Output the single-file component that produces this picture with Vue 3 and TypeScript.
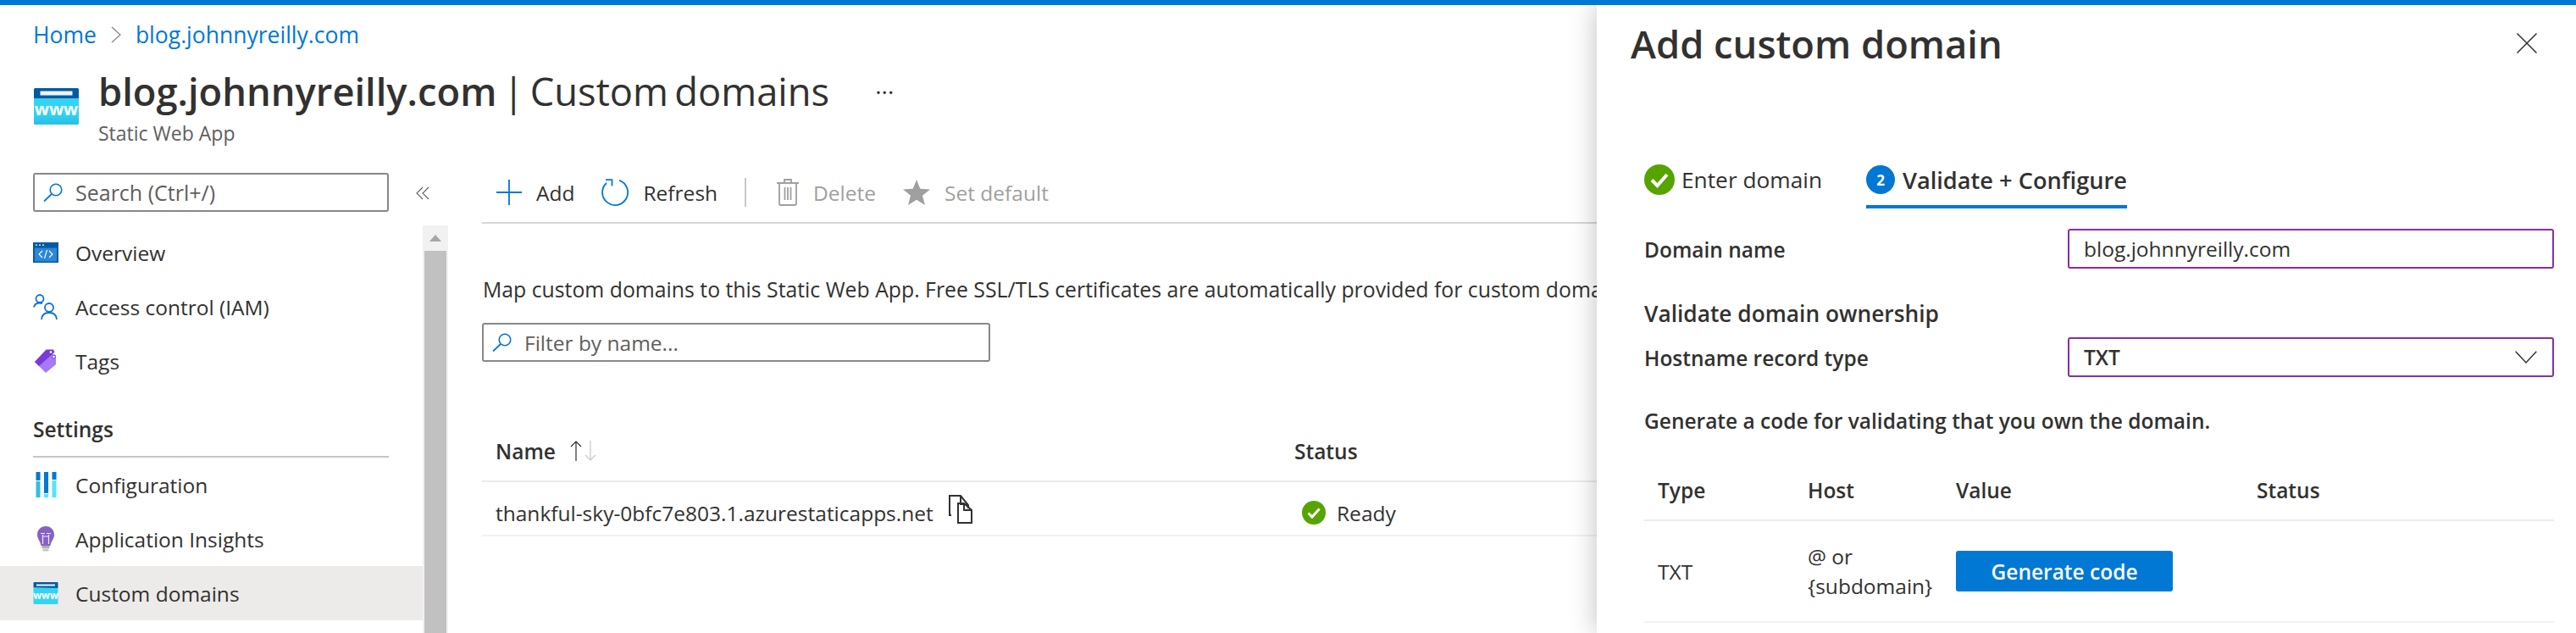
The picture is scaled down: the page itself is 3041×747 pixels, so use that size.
<script setup lang="ts">
const topNav: string[] = ['Overview', 'Access control (IAM)', 'Tags']
const settingsNav: string[] = ['Configuration', 'Application Insights', 'Custom domains']
</script>

<template>
  <div class="page">
    <nav class="crumbs">
      <span class="crumb">Home</span>
      <svg class="crumb-sep" viewBox="0 0 14 20" width="14" height="20"><path d="M2 1l10 9-10 9" fill="none" stroke="#8a8886" stroke-width="1.3" /></svg>
      <span class="crumb">blog.johnnyreilly.com</span>
    </nav>

    <header class="head">
      <svg class="head-icon" viewBox="0 0 53 43" width="53" height="43">
        <defs>
          <linearGradient id="wg" x1="0" y1="0" x2="0" y2="1"><stop offset="0.55" stop-color="#32d4f5" /><stop offset="1" stop-color="#29bfe3" /></linearGradient>
        </defs>
        <path d="M1.5 0h50a1.5 1.5 0 0 1 1.500 1.500v11h-53v-11a1.500 1.500 0 0 1 1.500-1.500z" fill="#005ba1" />
        <path d="M0 12.500h53v29a1.500 1.500 0 0 1-1.500 1.500h-50a1.500 1.500 0 0 1-1.500-1.500z" fill="url(#wg)" />
        <rect x="7.500" y="3.500" width="38" height="5" fill="#f2f2f2" />
        <text x="26.500" y="32" text-anchor="middle" class="www">www</text>
      </svg>
      <div class="head-text">
        <h1 class="title"><b>blog.johnnyreilly.com</b> | Custom domains</h1>
        <div class="subtitle">Static Web App</div>
      </div>
      <span class="more">···</span>
    </header>

    <div class="main">
      <aside class="side">
        <div class="side-top">
          <div class="search side-search">
            <svg class="mag" viewBox="0 0 24 22" width="24" height="22"><circle cx="15" cy="8" r="6.800" fill="none" stroke="#0078d4" stroke-width="1.600" /><path d="M10 13L1 21.500" stroke="#0078d4" stroke-width="1.800" /></svg>
            <span>Search (Ctrl+/)</span>
          </div>
          <svg class="collapse" viewBox="0 0 16 16" width="16" height="16"><path d="M8 1L1 8l7 7M15 1L8 8l7 7" fill="none" stroke="#605e5c" stroke-width="1.100" /></svg>
        </div>
        <div class="side-body">
          <div class="nav">
            <div class="nav-item" v-for="(item, i) in topNav" :key="item">
              <svg v-if="i === 0" class="nav-icon" viewBox="0 0 30 30" width="30" height="30">
                <rect x="0" y="3" width="30" height="24" fill="#005ba1" />
                <rect x="2" y="9.500" width="26" height="16" fill="#2b88d8" />
                <circle cx="4" cy="6.200" r="0.900" fill="#fff" /><circle cx="8" cy="6.200" r="0.900" fill="#fff" /><circle cx="12" cy="6.200" r="0.900" fill="#fff" />
                <path d="M11 13l-4 4 4 4M19 13l4 4-4 4M16.500 12l-3 10" fill="none" stroke="#fff" stroke-width="1.100" />
              </svg>
              <svg v-else-if="i === 1" class="nav-icon" viewBox="0 0 30 30" width="30" height="30">
                <g fill="none" stroke="#0f6fe0" stroke-width="1.800">
                  <circle cx="8" cy="5.500" r="4.500" /><path d="M.8 15.500C2 12 4.500 10.500 8 10.500c1 0 2 .2 3 .6" />
                  <circle cx="19" cy="16" r="5" /><path d="M10 30c.3-4.500 3-8 9-8s8.700 3.500 9 8" />
                </g>
              </svg>
              <svg v-else class="nav-icon" viewBox="0 0 30 30" width="30" height="30">
                <path d="M2 16L15 3.500l12 4.500v11L15 29z" fill="#a67af4" />
                <path d="M2 16L15.500 1.500h8.500l1.500 3L7 21z" fill="#773adc" />
                <circle cx="21" cy="4.500" r="1.800" fill="#fff" stroke="#5e2fb0" stroke-width="0.800" />
                <circle cx="24.500" cy="10" r="1.800" fill="#fff" stroke="#5e2fb0" stroke-width="0.800" />
              </svg>
              <span>{{ item }}</span>
            </div>
            <div class="nav-section">Settings</div>
            <div class="nav-item" :class="{ active: i === 2 }" v-for="(item, i) in settingsNav" :key="item">
              <svg v-if="i === 0" class="nav-icon" viewBox="0 0 30 30" width="30" height="30">
                <rect x="3.500" y="0" width="5" height="10" fill="#0078d4" /><rect x="3.500" y="11" width="5" height="19" fill="#32bedd" />
                <rect x="13" y="0" width="5" height="25" fill="#0078d4" /><rect x="13" y="26" width="5" height="4" fill="#50e6ff" />
                <rect x="22.500" y="0" width="5" height="9" fill="#0078d4" /><rect x="22.500" y="10" width="5" height="20" fill="#50e6ff" />
              </svg>
              <svg v-else-if="i === 1" class="nav-icon" viewBox="0 0 30 30" width="30" height="30">
                <path d="M15 0c6 0 10 4.500 10 10 0 5-3.500 7-4.500 13h-11C8.500 17 5 15 5 10 5 4.500 9 0 15 0z" fill="#8661c5" />
                <rect x="10.500" y="23" width="9" height="3" fill="#b0aeac" /><rect x="11.500" y="26.500" width="7" height="3" fill="#c8c6c4" />
                <path d="M11.500 10v11M18.500 10v11M9 8.500h5M16 8.500h5M11.500 12h7" fill="none" stroke="#f2e9ff" stroke-width="1.200" />
              </svg>
              <svg v-else class="nav-icon" viewBox="0 0 30 26" width="30" height="26">
                <path d="M.5 6.500V1a1 1 0 0 1 1-1h27a1 1 0 0 1 1 1v6z" fill="#005ba1" />
                <path d="M.5 7h29v18a1 1 0 0 1-1 1h-27a1 1 0 0 1-1-1z" fill="#32d4f5" />
                <rect x="4" y="2.500" width="22" height="2" fill="#f2f2f2" />
                <text x="15" y="19.500" text-anchor="middle" class="www small">www</text>
              </svg>
              <span>{{ item }}</span>
            </div>
          </div>
          <div class="scroll">
            <div class="scroll-up"><svg viewBox="0 0 14 8" width="14" height="8"><path d="M7 0l7 8H0z" fill="#a6a6a6" /></svg></div>
            <div class="scroll-thumb"></div>
          </div>
        </div>
      </aside>

      <section class="content">
        <div class="toolbar">
          <div class="tool add">
            <svg viewBox="0 0 30 30" width="30" height="30"><path d="M15 0v30M0 15h30" stroke="#0078d4" stroke-width="1.800" /></svg>
            <span>Add</span>
          </div>
          <div class="tool refresh">
            <svg viewBox="0 0 32 32" width="32" height="32"><g fill="none" stroke="#0078d4" stroke-width="1.800"><path d="M21 1.900A15 15 0 1 1 6 5" /><path d="M5 1.200h7.500V8.500" /></g></svg>
            <span>Refresh</span>
          </div>
          <div class="tool-sep"></div>
          <div class="tool off trash">
            <svg viewBox="0 0 26 32" width="26" height="32"><g fill="none" stroke="#a19f9d" stroke-width="1.800"><path d="M0 5h26M3 5v24.500a1.500 1.500 0 0 0 1.500 1.500h17a1.500 1.500 0 0 0 1.500-1.500V5M9 5V1h8v4M9.500 10v15M13 10v15M16.500 10v15" /></g></svg>
            <span>Delete</span>
          </div>
          <div class="tool off star">
            <svg viewBox="0 0 32 30" width="32" height="30"><path d="M16 0l4.300 10.700 11.700.7-9 7.400 3 11.200-10-6.300-10 6.300 3-11.200-9-7.400 11.700-.7z" fill="#a19f9d" /></svg>
            <span>Set default</span>
          </div>
        </div>

        <p class="lead">Map custom domains to this Static Web App. Free SSL/TLS certificates are automatically provided for custom domains.</p>

        <div class="search filter">
          <svg class="mag" viewBox="0 0 24 22" width="24" height="22"><circle cx="15" cy="8" r="6.800" fill="none" stroke="#0078d4" stroke-width="1.600" /><path d="M10 13L1 21.500" stroke="#0078d4" stroke-width="1.800" /></svg>
          <span>Filter by name...</span>
        </div>

        <div class="grid">
          <div class="g-head">
            <div class="g-cell name-head">
              <span class="semi">Name</span>
              <svg viewBox="0 0 32 24" width="32" height="24"><path d="M8 24V1M2 7l6-6 6 6" fill="none" stroke="#323130" stroke-width="1.200" /><path d="M25 0v23M19 17l6 6 6-6" fill="none" stroke="#c8c6c4" stroke-width="1.200" /></svg>
            </div>
            <div class="g-cell"><span class="semi">Status</span></div>
          </div>
          <div class="g-row">
            <div class="g-cell host-cell">
              <span>thankful-sky-0bfc7e803.1.azurestaticapps.net</span>
              <svg class="copy" viewBox="0 0 30 34" width="30" height="34"><path d="M3 24H1V1h13l9 11v4M11 33V10h7l9 8v15zM18 10v8h9M14 1v10h9" fill="none" stroke="#323130" stroke-width="2" /></svg>
            </div>
            <div class="g-cell status-cell">
              <svg viewBox="0 0 28 28" width="28" height="28"><circle cx="14" cy="14" r="14" fill="#57a300" /><path d="M7.500 14.500l4.500 4.500 8.500-9.500" fill="none" stroke="#fff" stroke-width="3" /></svg>
              <span>Ready</span>
            </div>
          </div>
        </div>
      </section>
    </div>

    <aside class="panel">
      <div class="panel-head">
        <h2 class="panel-title">Add custom domain</h2>
        <svg viewBox="0 0 24 24" width="24" height="24"><path d="M.5.500l23 23M23.500.500l-23 23" stroke="#323130" stroke-width="1.500" /></svg>
      </div>

      <div class="steps">
        <div class="step done">
          <svg viewBox="0 0 36 36" width="36" height="36"><circle cx="18" cy="18" r="18" fill="#57a300" /><path d="M9 18.500l6.500 6.500L27 12" fill="none" stroke="#fff" stroke-width="4" /></svg>
          <span>Enter domain</span>
        </div>
        <div class="step current">
          <span class="step-num">2</span>
          <span>Validate + Configure</span>
        </div>
      </div>

      <div class="form-row first">
        <label class="semi">Domain name</label>
        <div class="box">blog.johnnyreilly.com</div>
      </div>
      <div class="form-heading semi">Validate domain ownership</div>
      <div class="form-row">
        <label class="semi">Hostname record type</label>
        <div class="box select">
          <span>TXT</span>
          <svg viewBox="0 0 26 16" width="26" height="16"><path d="M.7.700L13 14 25.300.700" fill="none" stroke="#323130" stroke-width="1.500" /></svg>
        </div>
      </div>
      <div class="hint semi">Generate a code for validating that you own the domain.</div>

      <div class="rec">
        <div class="rec-row rec-head semi">
          <div>Type</div><div>Host</div><div>Value</div><div>Status</div>
        </div>
        <div class="rec-row rec-body">
          <div>TXT</div>
          <div class="hostcol">@ or<br />{subdomain}</div>
          <div><button class="primary" type="button">Generate code</button></div>
          <div></div>
        </div>
      </div>
    </aside>
  </div>
</template>

<style>
html, body { margin: 0; padding: 0; background: #fff; }
</style>

<style scoped>
.page {
  position: relative;
  height: 741px;
  overflow: hidden;
  border-top: 6px solid #0078d4;
  font-family: "Open Sans", "Noto Sans", sans-serif;
  font-size: 24.500px;
  color: #323130;
  background: #fff;
}
.semi { font-weight: 600; }
.crumbs {
  display: flex;
  align-items: center;
  height: 70px;
  padding-left: 39px;
  gap: 16px;
  color: #0078d4;
  font-size: 26.500px;
}
.head {
  display: flex;
  height: 128px;
  padding-left: 40px;
}
.head-icon { margin-top: 28px; flex: none; }
.head-text { margin-left: 23px; }
.title {
  margin: 0;
  font-size: 45.300px;
  font-weight: 400;
  line-height: 64px;
  word-spacing: -4.500px;
  white-space: nowrap;
}
.title b { font-weight: 600; }
.subtitle { color: #605e5c; font-size: 23px; line-height: 34px; margin-top: 0; }
.more { margin-left: 54px; font-size: 28px; line-height: 64px; font-weight: 400; color: #323130; }
.www { font-family: "Open Sans", sans-serif; font-weight: 700; font-size: 20px; fill: #fff; }
.www.small { font-size: 11.500px; }

.main { display: flex; height: 543px; }
.side { width: 529px; flex: none; display: flex; flex-direction: column; }
.side-top { position: relative; display: flex; align-items: flex-start; height: 62px; padding-left: 39px; }
.search {
  display: flex;
  align-items: center;
  box-sizing: border-box;
  border: 2px solid #8a8886;
  border-radius: 3px;
  color: #605e5c;
}
.side-search { width: 420px; height: 46px; padding-left: 10px; gap: 14px; font-size: 25px; }
.collapse { margin: 16px 0 0 32px; }
.side-body { flex: 1; display: flex; min-height: 0; }
.nav { width: 499px; flex: none; }
.nav-item {
  display: flex;
  align-items: center;
  height: 64px;
  padding-left: 39px;
  white-space: nowrap;
}
.nav-item > span { position: absolute; margin-left: 50px; }
.nav-icon { flex: none; }
.nav-item.active { background: #edebe9; }
.nav-section {
  box-sizing: border-box;
  height: 82px;
  margin: 0 40px 0 39px;
  padding-top: 32px;
  font-weight: 600;
  border-bottom: 2px solid #c8c6c4;
}
.scroll { width: 30px; flex: none; display: flex; flex-direction: column; background: #f1f1f1; }
.scroll-up { display: flex; justify-content: center; align-items: center; height: 30px; flex: none; }
.scroll-thumb { flex: 1; margin: 0 2px; background: #c1c1c1; }

.content { flex: 1; min-width: 0; padding-left: 40px; }
.toolbar {
  display: flex;
  align-items: center;
  height: 46px;
  padding: 0 0 12px 17px;
  border-bottom: 2px solid #d6d6d6;
}
.tool { display: flex; align-items: center; gap: 17px; white-space: nowrap; }
.tool.off { color: #a19f9d; }
.refresh { margin-left: 32px; }
.tool-sep { width: 2px; height: 34px; background: #c8c6c4; margin: 0 36px 0 32px; }
.star { margin-left: 32px; }
.lead { margin: 60px 0 0 1px; height: 34px; line-height: 34px; white-space: nowrap; font-size: 24.800px; }
.filter { width: 600px; height: 46px; margin-top: 23px; padding-left: 10px; gap: 14px; }
.grid { margin-top: 70px; }
.g-head, .g-row { display: grid; grid-template-columns: 943px 1fr; align-items: center; }
.g-head { height: 70px; border-bottom: 2px solid #edebe9; }
.g-row { height: 52px; padding-top: 10px; border-bottom: 2px solid #f3f2f1; }
.g-cell { padding-left: 16px; white-space: nowrap; }
.name-head { display: flex; align-items: center; gap: 16px; }
.host-cell { display: flex; align-items: center; gap: 18px; }
.copy { margin-top: -8px; }
.status-cell { display: flex; align-items: center; gap: 13px; padding-left: 25px; }

.panel {
  position: absolute;
  top: 0;
  bottom: 0;
  left: 1885px;
  right: 0;
  padding: 0 26px 0 56px;
  background: #fff;
  box-shadow: 0 0 30px rgba(0, 0, 0, 0.25);
}
.panel-head {
  display: flex;
  align-items: center;
  justify-content: space-between;
  height: 90px;
  margin-left: -16px;
  padding-right: 20px;
}
.panel-title { margin: 0; font-size: 45.300px; font-weight: 600; white-space: nowrap; }
.steps { display: flex; align-items: flex-start; height: 60px; margin-top: 90px; }
.step { display: flex; align-items: center; height: 60px; box-sizing: border-box; white-space: nowrap; }
.done { gap: 8px; width: 262px; padding-bottom: 8px; font-size: 26.300px; }
.current { gap: 9px; font-weight: 600; font-size: 27.200px; border-bottom: 4px solid #0078d4; padding-bottom: 4px; }
.step-num {
  display: flex;
  align-items: center;
  justify-content: center;
  width: 34px;
  height: 34px;
  border-radius: 50%;
  background: #0078d4;
  color: #fff;
  font-size: 17px;
  font-weight: 700;
}
.form-row { display: grid; grid-template-columns: 500px 574px; align-items: center; }
.form-row label { padding-top: 2px; }
.form-row.first { margin-top: 24px; }
.box {
  display: flex;
  align-items: center;
  justify-content: space-between;
  box-sizing: border-box;
  height: 47px;
  padding: 0 18px 0 17px;
  border: 2px solid #8a2da5;
  border-radius: 3px;
}
.select { font-weight: 600; }
.form-heading { margin-top: 36px; height: 34px; line-height: 34px; margin-bottom: 11px; font-size: 26.300px; }
.hint { margin-top: 35px; height: 34px; line-height: 34px; white-space: nowrap; }
.rec { margin-top: 29px; width: 1074px; }
.rec-row { display: grid; grid-template-columns: 177px 175px 355px 1fr; align-items: center; }
.rec-row > div { padding-left: 16px; }
.rec-head { height: 70px; border-bottom: 2px solid #edebe9; }
.rec-body { height: 118px; border-bottom: 2px solid #f3f2f1; }
.hostcol { line-height: 35px; }
.primary {
  display: block;
  width: 256px;
  height: 48px;
  border: 0;
  border-radius: 3px;
  background: #0078d4;
  color: #fff;
  font: 600 24.500px "Open Sans", sans-serif;
}
</style>
